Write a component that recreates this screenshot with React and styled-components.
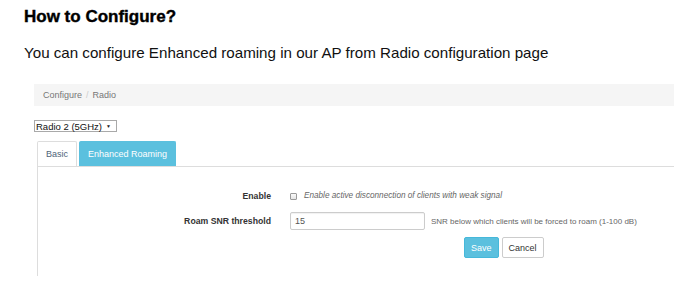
import React from 'react';
import styled, { createGlobalStyle } from 'styled-components';

const GlobalStyle = createGlobalStyle`
  html, body {
    margin: 0;
    padding: 0;
    background: #fff;
    font-family: "Liberation Sans", Arial, sans-serif;
  }
`;

const Page = styled.div`
  width: 690px;
  height: 298px;
  overflow: hidden;
  padding-left: 24px;
  box-sizing: border-box;
`;

const Title = styled.h3`
  margin: 7px 0 0;
  font-size: 17px;
  line-height: 20px;
  font-weight: bold;
  color: #000;
  -webkit-text-stroke: 0.4px #000;
`;

const Lead = styled.p`
  margin: 16px 0 0;
  font-size: 15.15px;
  line-height: 20px;
  color: #111;
`;

const Shot = styled.div`
  margin: 21px 0 0 10px;
  width: 640px;
`;

const Breadcrumb = styled.ol`
  list-style: none;
  margin: 0;
  padding: 0 0 0 9px;
  height: 22px;
  display: flex;
  align-items: center;
  background: #f5f5f5;
  font-size: 9px;
  color: #777;
`;

const Crumb = styled.li`
  & + &::before {
    content: '/';
    padding: 0 4px;
    color: #ccc;
  }
`;

const SelectBox = styled.div`
  margin-top: 14px;
  width: 83px;
  height: 12px;
  box-sizing: border-box;
  border: 1px solid #a9a9a9;
  display: flex;
  align-items: center;
  justify-content: space-between;
  padding: 0 5px 0 1px;
  font-size: 9.5px;
  color: #111;
  background: #fff;
`;

const Arrow = styled.span`
  font-size: 5px;
  color: #222;
`;

const TabBar = styled.div`
  margin: 9px 0 0 3px;
  display: flex;
  gap: 2px;
  border-bottom: 1px solid #ddd;
`;

const Tab = styled.div`
  height: 25px;
  box-sizing: border-box;
  padding: 0 8px;
  display: flex;
  align-items: center;
  font-size: 9px;
  color: ${p => (p.$active ? '#fff' : '#4f6478')};
  background: ${p => (p.$active ? '#5bc0de' : '#fff')};
  border: 1px solid ${p => (p.$active ? '#5bc0de' : '#ddd')};
  border-bottom: none;
  border-radius: 2px 2px 0 0;
`;

const Panel = styled.div`
  margin-left: 3px;
  height: 109px;
  border-left: 1px solid #ddd;
  padding-top: 22px;
  box-sizing: border-box;
`;

const Row = styled.div`
  display: grid;
  grid-template-columns: 233px 1fr;
  column-gap: 19px;
  align-items: center;
  margin-top: ${p => p.$gap || 0}px;
`;

const Label = styled.div`
  text-align: right;
  font-size: 8.7px;
  font-weight: bold;
  color: #333;
`;

const Control = styled.div`
  display: flex;
  align-items: center;
`;

const Check = styled.span`
  width: 7px;
  height: 7px;
  box-sizing: border-box;
  border: 1px solid #9a9a9a;
  border-radius: 1px;
  background: linear-gradient(#fafafa, #e4e4e4);
  margin-right: 7px;
`;

const Italic = styled.span`
  font-size: 8.2px;
  font-style: italic;
  color: #666;
  line-height: 14px;
`;

const Input = styled.div`
  width: 135px;
  height: 18px;
  box-sizing: border-box;
  border: 1px solid #ccc;
  border-radius: 2px;
  box-shadow: inset 0 1px 1px rgba(0, 0, 0, 0.06);
  padding-left: 4px;
  display: flex;
  align-items: center;
  font-size: 9px;
  color: #555;
`;

const Help = styled.span`
  margin-left: 6px;
  font-size: 8px;
  color: #666;
`;

const Buttons = styled.div`
  margin: 7px 0 0 174px;
  display: flex;
  gap: 3px;
`;

const Button = styled.div`
  height: 21px;
  box-sizing: border-box;
  padding: 0 ${p => p.$pad}px;
  display: flex;
  align-items: center;
  font-size: 9px;
  border-radius: 2px;
  border: 1px solid ${p => (p.$primary ? '#46b8da' : '#ccc')};
  background: ${p => (p.$primary ? '#5bc0de' : '#fff')};
  color: ${p => (p.$primary ? '#fff' : '#333')};
`;

export default function App() {
  return (
    <>
      <GlobalStyle />
      <Page>
        <Title>How to Configure?</Title>
        <Lead>You can configure Enhanced roaming in our AP from Radio configuration page</Lead>
        <Shot>
          <Breadcrumb>
            <Crumb>Configure</Crumb>
            <Crumb>Radio</Crumb>
          </Breadcrumb>
          <SelectBox>
            <span>Radio 2 (5GHz)</span>
            <Arrow>▼</Arrow>
          </SelectBox>
          <TabBar>
            <Tab>Basic</Tab>
            <Tab $active>Enhanced Roaming</Tab>
          </TabBar>
          <Panel>
            <Row>
              <Label>Enable</Label>
              <Control>
                <Check />
                <Italic>Enable active disconnection of clients with weak signal</Italic>
              </Control>
            </Row>
            <Row $gap={9}>
              <Label>Roam SNR threshold</Label>
              <Control>
                <Input>15</Input>
                <Help>SNR below which clients will be forced to roam (1-100 dB)</Help>
              </Control>
            </Row>
            <Row>
              <div />
              <Buttons>
                <Button $primary $pad={6}>Save</Button>
                <Button $pad={6}>Cancel</Button>
              </Buttons>
            </Row>
          </Panel>
        </Shot>
      </Page>
    </>
  );
}
